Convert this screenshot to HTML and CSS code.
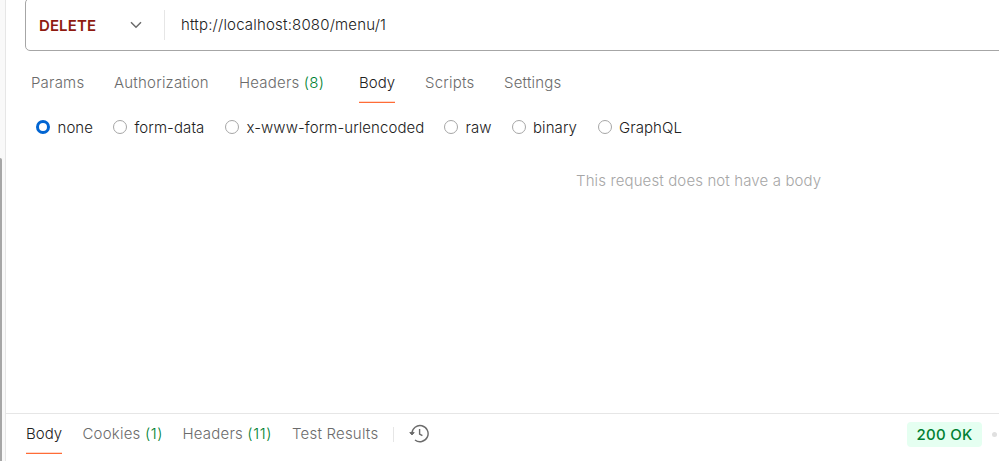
FILE: index.html
```html
<!DOCTYPE html>
<html lang="en">
<head>
<meta charset="utf-8">
<title>Request</title>
<link rel="stylesheet" href="styles.css">
</head>
<body>
<div class="app">
  <aside class="rail"><div class="thumb"></div></aside>
  <main class="pane">
    <section class="request">
      <div class="urlbar">
        <div class="method"><span>DELETE</span>
          <svg width="12" height="8" viewBox="0 0 12 8"><path d="M1 1.2 6 6.2l5-5" fill="none" stroke="#6b6b6b" stroke-width="1.5"/></svg>
        </div>
        <div class="url">http://localhost:8080/menu/1</div>
      </div>
      <nav class="tabs">
        <a>Params</a><a>Authorization</a><a>Headers <b>(8)</b></a><a class="active">Body</a><a>Scripts</a><a>Settings</a>
      </nav>
      <div class="modes">
        <label class="on"><i></i><span>none</span></label>
        <label><i></i><span>form-data</span></label>
        <label><i></i><span>x-www-form-urlencoded</span></label>
        <label><i></i><span>raw</span></label>
        <label><i></i><span>binary</span></label>
        <label><i></i><span>GraphQL</span></label>
      </div>
      <p class="empty">This request does not have a body</p>
    </section>
    <section class="response">
      <nav class="rtabs">
        <a class="active">Body</a><a>Cookies <b>(1)</b></a><a>Headers <b>(11)</b></a><a>Test Results</a>
      </nav>
      <div class="sep"></div>
      <svg class="history" width="20" height="20" viewBox="0 0 20 20" fill="none" stroke="#6b6b6b" stroke-width="1.4"><path d="M2.9 10.4V9.4A8.1 8.1 0 1 1 6 16M10.6 5v5l2.8 1.7"/><path d="M.8 8.6h4.4L3 10.9z" fill="#6b6b6b" stroke-width="1"/></svg>
      <div class="status">200 OK</div>
      <div class="dot"></div>
    </section>
  </main>
</div>
</body>
</html>
```
FILE: styles.css
```css
* { box-sizing: border-box; }
body { margin: 0; background: #fff; font: 350 15px/20px Inter, sans-serif; color: #212121; overflow: hidden; }
.app { display: flex; width: 999px; height: 461px; }
.rail { width: 6px; flex: none; background: #f9f9f9; border-right: 1px solid #e6e6e6; padding-top: 158px; }
.thumb { width: 2px; height: 303px; background: #a6a6a6; border-top-right-radius: 2px; }
.pane { flex: 1; min-width: 0; display: flex; flex-direction: column; }
.request { height: 413px; }
.urlbar { display: flex; align-items: center; height: 53px; margin: -2px -6px 0 19px; border: 1px solid #a6a6a6; border-radius: 5px; }
.method { display: flex; align-items: center; justify-content: space-between; width: 139px; height: 30px; padding: 0 22px 0 13px; border-right: 1px solid #e6e6e6; color: #8e1a10; font-weight: 600; letter-spacing: .1px; }
.method span { padding-top: 2px; }
.url { padding-left: 16px; letter-spacing: .18px; }
.tabs { display: grid; grid-template-columns: 83px 125px 120px 66px 79px 80px; margin: 12px 0 0 25px; height: 41px; color: #6b6b6b; letter-spacing: .2px; }
.tabs a, .rtabs a { justify-self: start; white-space: nowrap; }
.tabs a { padding-top: 10px; height: 40px; }
b { font-weight: 350; color: #007f31; }
.tabs .active, .rtabs .active { color: #212121; border-bottom: 1px solid #ff6c37; background: linear-gradient(#ffd9cb, #ffd9cb) bottom / 100% 1px no-repeat; letter-spacing: 0; }
.modes { display: grid; grid-template-columns: 77px 112px 219px 67.5px 86px 100px; margin: 13px 0 0 30px; letter-spacing: .07px; }
.modes label { display: flex; align-items: center; gap: 7.5px; white-space: nowrap; }
.modes span { padding-top: 1px; }
.modes i { width: 14px; height: 14px; margin-top: -1px; border: 1px solid #a6a6a6; border-radius: 50%; flex: none; }
.modes .on i { border: 3.5px solid #0265d2; }
.empty { margin: 33px 0 0 570px; color: #a6a6a6; white-space: nowrap; letter-spacing: .12px; }
.response { display: flex; align-items: center; height: 48px; border-top: 1px solid #e6e6e6; padding-left: 20px; }
.rtabs { display: grid; grid-template-columns: 56.5px 100px 109.5px 101px; height: 40px; align-self: flex-start; color: #6b6b6b; letter-spacing: .2px; }
.rtabs b { letter-spacing: .6px; }
.rtabs a { padding-top: 10px; height: 40px; }
.sep { width: 1px; height: 15px; background: #e6e6e6; margin-top: -6px; }
.history { margin: -8px 0 0 15px; }
.status { margin: -6px 0 0 478px; width: 75px; height: 25px; border-radius: 4px; background: #e5fff1; color: #007f31; font-weight: 500; line-height: 25px; text-align: center; letter-spacing: .25px; }
.dot { width: 5px; height: 5px; margin: -6px 0 0 10px; border-radius: 50%; background: #e0e0e0; }
```
